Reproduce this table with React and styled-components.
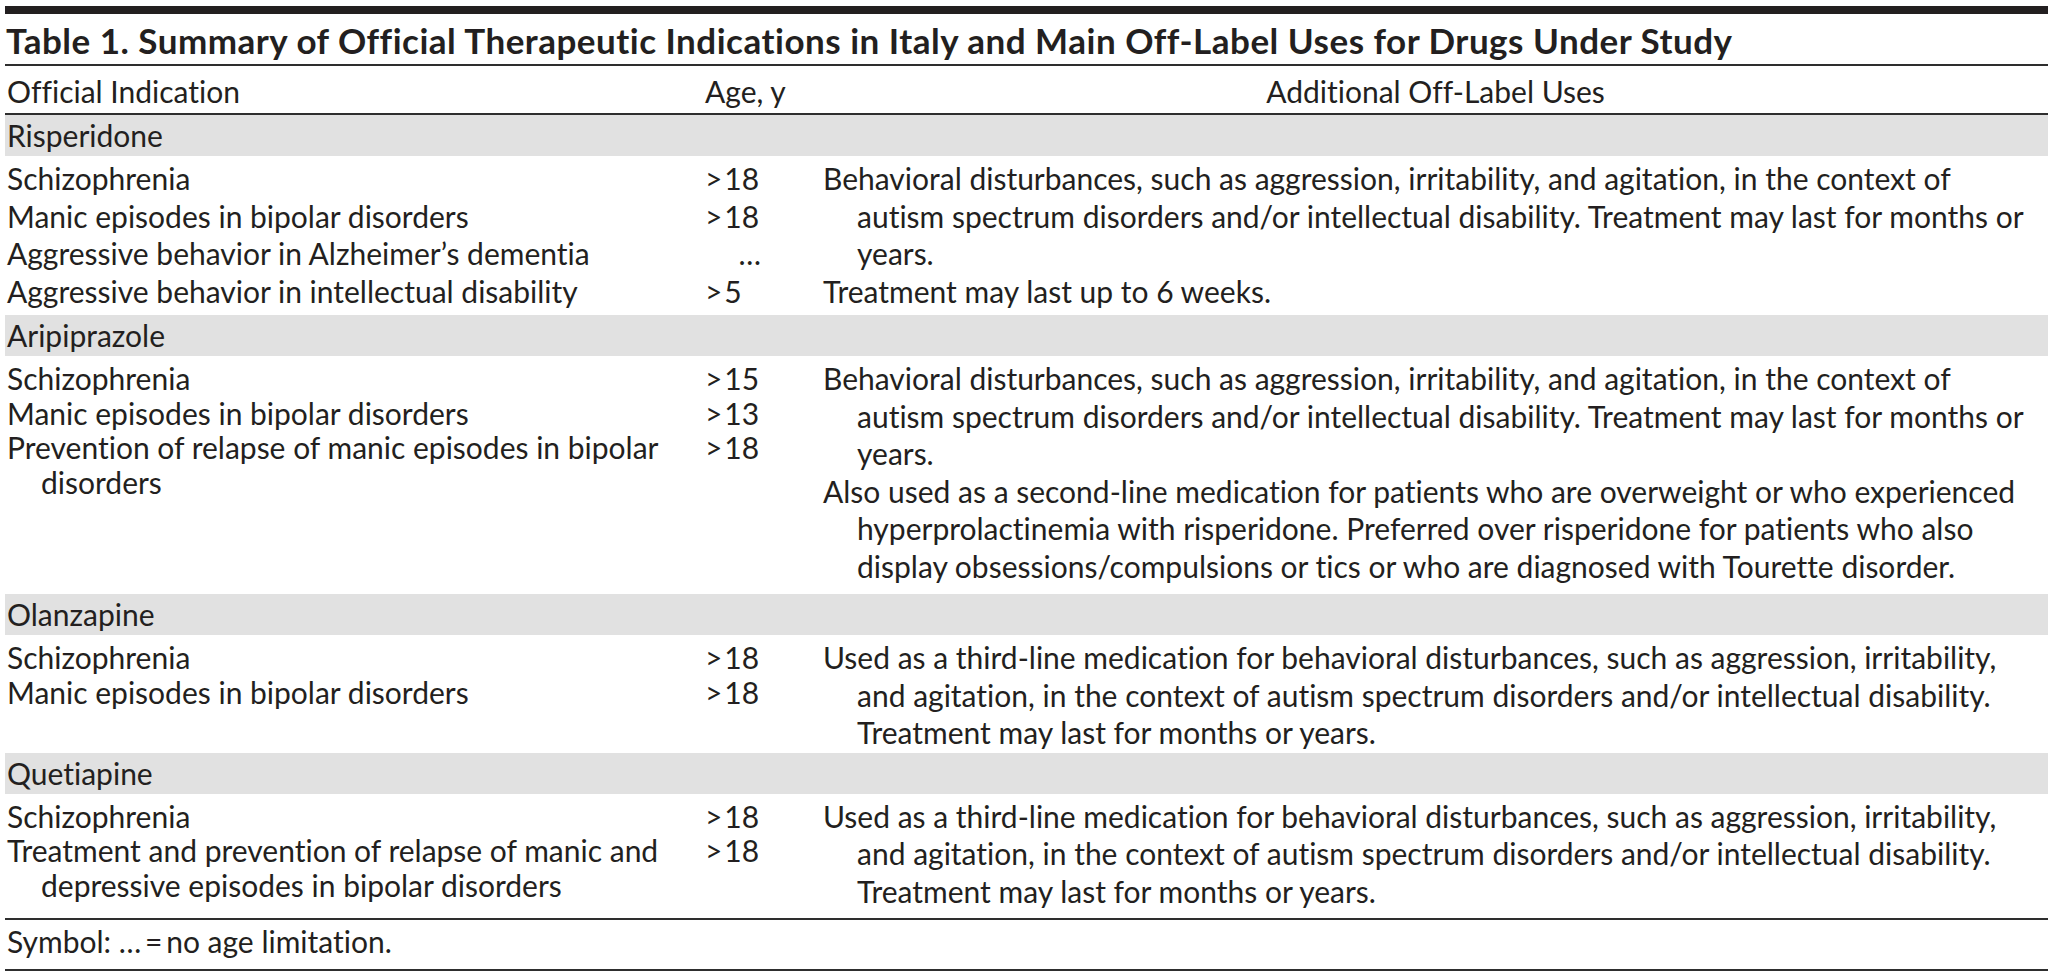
import React from 'react'
import styled, { createGlobalStyle } from 'styled-components'

const GlobalStyle = createGlobalStyle`
  body {
    margin: 0;
    background: #fff;
  }
`

const Table = styled.section`
  width: 2043px;
  margin-left: 5px;
  padding-top: 6px;
  font-family: Lato, 'Liberation Sans', sans-serif;
  font-size: 30px;
  color: #231f20;
  font-variant-ligatures: none;
  font-feature-settings: 'liga' 0, 'dlig' 0;
`

const Caption = styled.h1`
  margin: 0;
  padding: 2px 0 0 1px;
  border-top: 8px solid #231f20;
  border-bottom: 2px solid #2e2e2e;
  font-size: 35px;
  font-weight: 700;
  letter-spacing: 0.5px;
  line-height: 48px;
  white-space: nowrap;
`

const HeadRow = styled.div`
  display: grid;
  grid-template-columns: 700px 118px 1fr;
  padding-top: 3px;
  line-height: 44px;
  border-bottom: 2px solid #2e2e2e;
`

const HeadCell = styled.div`
  padding-left: ${(p) => (p.$first ? '2px' : '0')};
  text-align: ${(p) => (p.$center ? 'center' : 'left')};
  white-space: nowrap;
`

const Band = styled.div`
  background: #e1e1e1;
  height: 41px;
  line-height: 41px;
  padding-left: 2px;
`

const Body = styled.div`
  display: grid;
  grid-template-columns: 818px 1fr;
  align-items: baseline;
  padding: 4px 0 ${(p) => p.$pad}px;
`

const Indications = styled.div`
  display: grid;
  grid-template-columns: 700px 118px;
  line-height: ${(p) => p.$lh}px;
`

const IndicationCell = styled.div`
  padding-left: 2px;
`

const AgeCell = styled.div`
  width: 56px;
  text-align: ${(p) => (p.$right ? 'right' : 'left')};
  white-space: nowrap;
`

const OffLabel = styled.div`
  line-height: 37.5px;
`

const Line = styled.div`
  padding-left: ${(p) => (p.$cont ? '34px' : '0')};
  white-space: nowrap;
`

const Footer = styled.div`
  border-top: 2px solid #2e2e2e;
  border-bottom: 2px solid #2e2e2e;
  line-height: 40px;
  padding: 1px 0 8px 2px;
`

const behavioral = [
  'Behavioral disturbances, such as aggression, irritability, and agitation, in the context of',
  'autism spectrum disorders and/or intellectual disability. Treatment may last for months or',
  'years.',
]

const thirdLine = [
  'Used as a third-line medication for behavioral disturbances, such as aggression, irritability,',
  'and agitation, in the context of autism spectrum disorders and/or intellectual disability.',
  'Treatment may last for months or years.',
]

const gt = (n) => `>\u200a${n}`

const drugs = [
  {
    name: 'Risperidone',
    lh: 37.5,
    pad: 5,
    rows: [
      [['Schizophrenia'], gt(18)],
      [['Manic episodes in bipolar disorders'], gt(18)],
      [['Aggressive behavior in Alzheimer’s dementia'], '…'],
      [['Aggressive behavior in intellectual disability'], gt(5)],
    ],
    uses: [behavioral, ['Treatment may last up to 6 weeks.']],
  },
  {
    name: 'Aripiprazole',
    lh: 34.5,
    pad: 9,
    rows: [
      [['Schizophrenia'], gt(15)],
      [['Manic episodes in bipolar disorders'], gt(13)],
      [['Prevention of relapse of manic episodes in bipolar', 'disorders'], gt(18)],
    ],
    uses: [
      behavioral,
      [
        'Also used as a second-line medication for patients who are overweight or who experienced',
        'hyperprolactinemia with risperidone. Preferred over risperidone for patients who also',
        'display obsessions/compulsions or tics or who are diagnosed with Tourette disorder.',
      ],
    ],
  },
  {
    name: 'Olanzapine',
    lh: 34.5,
    pad: 1,
    rows: [
      [['Schizophrenia'], gt(18)],
      [['Manic episodes in bipolar disorders'], gt(18)],
    ],
    uses: [thirdLine],
  },
  {
    name: 'Quetiapine',
    lh: 34.5,
    pad: 8,
    rows: [
      [['Schizophrenia'], gt(18)],
      [['Treatment and prevention of relapse of manic and', 'depressive episodes in bipolar disorders'], gt(18)],
    ],
    uses: [thirdLine],
  },
]

const Lines = ({ lines }) =>
  lines.map((text, i) => (
    <Line key={i} $cont={i > 0}>
      {text}
    </Line>
  ))

const DrugSection = ({ drug }) => (
  <>
    <Band>{drug.name}</Band>
    <Body $pad={drug.pad}>
      <Indications $lh={drug.lh}>
        {drug.rows.map(([lines, age], i) => (
          <React.Fragment key={i}>
            <IndicationCell>
              <Lines lines={lines} />
            </IndicationCell>
            <AgeCell $right={age === '…'}>{age}</AgeCell>
          </React.Fragment>
        ))}
      </Indications>
      <OffLabel>
        {drug.uses.map((lines, i) => (
          <Lines key={i} lines={lines} />
        ))}
      </OffLabel>
    </Body>
  </>
)

export default function App() {
  return (
    <>
      <GlobalStyle />
      <Table>
        <Caption>
          Table 1. Summary of Official Therapeutic Indications in Italy and Main Off-Label Uses for Drugs Under Study
        </Caption>
        <HeadRow>
          <HeadCell $first>Official Indication</HeadCell>
          <HeadCell>Age, y</HeadCell>
          <HeadCell $center>Additional Off-Label Uses</HeadCell>
        </HeadRow>
        {drugs.map((drug) => (
          <DrugSection key={drug.name} drug={drug} />
        ))}
        <Footer>Symbol: …{'\u2009'}={'\u2009'}no age limitation.</Footer>
      </Table>
    </>
  )
}
